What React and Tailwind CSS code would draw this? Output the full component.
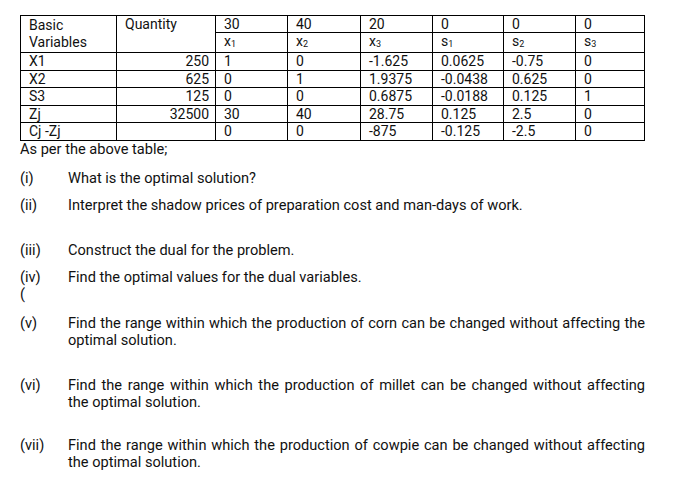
const font = { fontFamily: 'Roboto, "Liberation Sans", sans-serif' };

const rows = [
  ['X1', '250', '1', '0', '-1.625', '0.0625', '-0.75', '0'],
  ['X2', '625', '0', '1', '1.9375', '-0.0438', '0.625', '0'],
  ['S3', '125', '0', '0', '0.6875', '-0.0188', '0.125', '1'],
  ['Zj', '32500', '30', '40', '28.75', '0.125', '2.5', '0'],
  ['Cj -Zj', '', '0', '0', '-875', '-0.125', '-2.5', '0'],
];

const rowH = ['h-[18px]', 'h-[17px]', 'h-[18px]', 'h-[17px]', 'h-[18px]'];

const cj = ['30', '40', '20', '0', '0', '0'];
const vars = [
  ['x', '1'],
  ['x', '2'],
  ['x', '3'],
  ['s', '1'],
  ['s', '2'],
  ['s', '3'],
];

const cell = 'border border-black p-0 pt-[1px] pl-[8px] align-top leading-[15px]';

function Question({ label, lines, className = '' }) {
  return (
    <div className={`flex ${className}`}>
      <div className="w-[48px] shrink-0">{label}</div>
      <div className="w-[577px]">
        {lines.map((l, i) => (
          <div
            key={i}
            className={i < lines.length - 1 ? 'text-justify [text-align-last:justify]' : ''}
          >
            {l}
          </div>
        ))}
      </div>
    </div>
  );
}

export default function App() {
  return (
    <div className="min-h-screen bg-white pl-[20px] pt-[15px] text-[#111]" style={font}>
      <table className="table-fixed border-collapse w-[624px] text-[14px]">
        <colgroup>
          <col className="w-[96px]" />
          <col className="w-[99px]" />
          <col className="w-[72px]" />
          <col className="w-[73px]" />
          <col className="w-[72px]" />
          <col className="w-[71px]" />
          <col className="w-[72px]" />
          <col className="w-[69px]" />
        </colgroup>
        <tbody>
          <tr className="h-[17px]">
            <td rowSpan={2} className={`${cell} leading-[17px]`}>
              Basic
              <br />
              Variables
            </td>
            <td rowSpan={2} className={cell}>Quantity</td>
            {cj.map((c, i) => (
              <td key={i} className={cell}>{c}</td>
            ))}
          </tr>
          <tr className="h-[18px]">
            {vars.map(([v, n], i) => (
              <td key={i} className={cell}>
                {v}
                <span className="text-[9px] align-[-1px]">{n}</span>
              </td>
            ))}
          </tr>
          {rows.map((r, ri) => (
            <tr key={ri} className={rowH[ri]}>
              {r.map((c, ci) => (
                <td
                  key={ci}
                  className={
                    ci === 1
                      ? 'border border-black p-0 pt-[1px] pr-[6px] text-right align-top leading-[15px]'
                      : cell
                  }
                >
                  {c}
                </td>
              ))}
            </tr>
          ))}
        </tbody>
      </table>

      <div className="text-[14.6px] leading-[17px]">
        <div>As per the above table;</div>

        <Question className="mt-[12px]" label="(i)" lines={['What is the optimal solution?']} />
        <Question
          className="mt-[10px]"
          label="(ii)"
          lines={['Interpret the shadow prices of preparation cost and man-days of work.']}
        />
        <Question className="mt-[28px]" label="(iii)" lines={['Construct the dual for the problem.']} />
        <Question
          className="mt-[10px]"
          label="(iv)"
          lines={['Find the optimal values for the dual variables.']}
        />
        <div>(</div>
        <Question
          className="mt-[12px]"
          label="(v)"
          lines={[
            'Find the range within which the production of corn can be changed without affecting the',
            'optimal solution.',
          ]}
        />
        <Question
          className="mt-[28px]"
          label="(vi)"
          lines={[
            'Find the range within which the production of millet can be changed without affecting',
            'the optimal solution.',
          ]}
        />
        <Question
          className="mt-[26px]"
          label="(vii)"
          lines={[
            'Find the range within which the production of cowpie can be changed without affecting',
            'the optimal solution.',
          ]}
        />
      </div>
    </div>
  );
}
